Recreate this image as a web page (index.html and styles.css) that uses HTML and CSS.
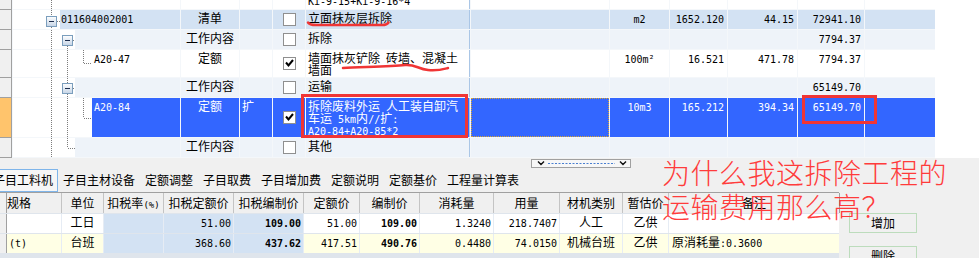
FILE: index.html
```html
<!DOCTYPE html>
<html lang="zh-CN">
<head>
    <meta charset="UTF-8">
    <title>定额子目 - 工料机</title>
    <link rel="stylesheet" href="styles.css">
</head>
<body>
<div class="page">

    <!-- 上方：清单 / 定额 树表 -->
    <div class="top">
        <div class="tgrid">

            <div class="row r-cut">
                <div class="rh"></div>
                <div class="tree">
                    <svg class="ind" width="62" height="9"><path class="dot" d="M38.5 0V9"/></svg>
                    <div class="code"></div>
                </div>
                <div class="c"></div>
                <div class="c"></div>
                <div class="c"></div>
                <div class="c name"><div class="cut"><span class="n">Ki-9-15+Ki-9-16*4</span></div></div>
                <div class="c spec"></div>
                <div class="c"></div>
                <div class="c"></div>
                <div class="c"></div>
                <div class="c"></div>
                <div class="c"></div>
            </div>

            <div class="row r-list">
                <div class="rh"></div>
                <div class="tree">
                    <svg class="ind" width="47" height="19">
                        <defs>
                            <linearGradient id="bxg" x1="0" y1="0" x2="0" y2="1">
                                <stop offset="0" stop-color="#ffffff"/>
                                <stop offset="1" stop-color="#c5d4e6"/>
                            </linearGradient>
                        </defs>
                        <path class="dot" d="M38.5 0V6M38.5 17V19M44 11.5H47"/>
                        <rect class="bx" x="33.5" y="6.5" width="10" height="10"/>
                        <path class="minus" d="M36 11.5H41"/>
                    </svg>
                    <div class="code"><span class="n">011604002001</span></div>
                </div>
                <div class="c ctr">清单</div>
                <div class="c"></div>
                <div class="c chk"><svg width="13" height="13"><rect class="box" x="0.5" y="0.5" width="12" height="12"/></svg></div>
                <div class="c name">立面抹灰层拆除</div>
                <div class="c spec"></div>
                <div class="c ctr"><span class="n">m2</span></div>
                <div class="c num"><span class="n">1652.120</span></div>
                <div class="c num"><span class="n">44.15</span></div>
                <div class="c num"><span class="n">72941.10</span></div>
                <div class="c"></div>
            </div>

            <div class="row r-work">
                <div class="rh"></div>
                <div class="tree">
                    <svg class="ind" width="62" height="19">
                        <path class="dot" d="M38.5 0V19M54.5 16V19M60 10.5H62"/>
                        <rect class="bx" x="49.5" y="5.5" width="10" height="10"/>
                        <path class="minus" d="M52 10.5H57"/>
                    </svg>
                    <div class="code"></div>
                </div>
                <div class="c ctr">工作内容</div>
                <div class="c"></div>
                <div class="c chk"><svg width="13" height="13"><rect class="box" x="0.5" y="0.5" width="12" height="12"/></svg></div>
                <div class="c name">拆除</div>
                <div class="c spec"></div>
                <div class="c"></div>
                <div class="c"></div>
                <div class="c"></div>
                <div class="c num"><span class="n">7794.37</span></div>
                <div class="c"></div>
            </div>

            <div class="row r-quota">
                <div class="rh"></div>
                <div class="tree">
                    <svg class="ind" width="79" height="27"><path class="dot" d="M38.5 0V27M54.5 0V27M70.5 0V13M71 13.5H79"/></svg>
                    <div class="code"><span class="n">A20-47</span></div>
                </div>
                <div class="c ctr">定额</div>
                <div class="c"></div>
                <div class="c chk"><svg width="13" height="13"><rect class="box" x="0.5" y="0.5" width="12" height="12"/><path class="tick" d="M3 5.5L5.5 8.5L10 3"/></svg></div>
                <div class="c name">墙面抹灰铲除<span class="n"> </span>砖墙、混凝土<br>墙面</div>
                <div class="c spec"></div>
                <div class="c ctr"><span class="n">100m²</span></div>
                <div class="c num"><span class="n">16.521</span></div>
                <div class="c num"><span class="n">471.78</span></div>
                <div class="c num"><span class="n">7794.37</span></div>
                <div class="c"></div>
            </div>

            <div class="row r-work">
                <div class="rh"></div>
                <div class="tree">
                    <svg class="ind" width="62" height="19">
                        <path class="dot" d="M38.5 0V19M54.5 0V5M54.5 16V19M60 10.5H62"/>
                        <rect class="bx" x="49.5" y="5.5" width="10" height="10"/>
                        <path class="minus" d="M52 10.5H57"/>
                    </svg>
                    <div class="code"></div>
                </div>
                <div class="c ctr">工作内容</div>
                <div class="c"></div>
                <div class="c chk"><svg width="13" height="13"><rect class="box" x="0.5" y="0.5" width="12" height="12"/></svg></div>
                <div class="c name">运输</div>
                <div class="c spec"></div>
                <div class="c"></div>
                <div class="c"></div>
                <div class="c"></div>
                <div class="c num"><span class="n">65149.70</span></div>
                <div class="c"></div>
            </div>

            <div class="row r-sel">
                <div class="rh"></div>
                <div class="tree">
                    <svg class="ind" width="79" height="39"><path class="dot" d="M38.5 0V39M54.5 0V39M70.5 0V20M71 20.5H79"/></svg>
                    <div class="code"><span class="n">A20-84</span></div>
                </div>
                <div class="c ctr">定额</div>
                <div class="c">扩</div>
                <div class="c chk"><svg width="13" height="13"><rect class="box" x="0.5" y="0.5" width="12" height="12"/><path class="tick" d="M3 5.5L5.5 8.5L10 3"/></svg></div>
                <div class="c name">拆除废料外运<span class="n"> </span>人工装自卸汽<br>车运<span class="n"> 5km</span>内<span class="n">//</span>扩<span class="n">:</span><br><span class="n">A20-84+A20-85*2</span></div>
                <div class="c spec"></div>
                <div class="c ctr"><span class="n">10m3</span></div>
                <div class="c num"><span class="n">165.212</span></div>
                <div class="c num"><span class="n">394.34</span></div>
                <div class="c num"><span class="n">65149.70</span></div>
                <div class="c"></div>
            </div>

            <div class="row r-work">
                <div class="rh"></div>
                <div class="tree">
                    <svg class="ind" width="62" height="19"><path class="dot" d="M38.5 0V19M54.5 0V10M55 10.5H62"/></svg>
                    <div class="code"></div>
                </div>
                <div class="c ctr">工作内容</div>
                <div class="c"></div>
                <div class="c chk"><svg width="13" height="13"><rect class="box" x="0.5" y="0.5" width="12" height="12"/></svg></div>
                <div class="c name">其他</div>
                <div class="c spec"></div>
                <div class="c"></div>
                <div class="c"></div>
                <div class="c"></div>
                <div class="c"></div>
                <div class="c"></div>
            </div>

        </div>
    </div>

    <!-- 下方：子目工料机 -->
    <div class="bottom">
        <div class="strip">
            <svg class="hscroll" width="100" height="9">
                <rect x="0.5" y="0.5" width="99" height="8" fill="#f7f7f7" stroke="#a0a0a0"/>
                <path class="chev" d="M7 2.5L10 5.5L13 2.5M89 2.5L92 5.5L95 2.5"/>
                <path class="dotline" d="M17 4.5H84"/>
            </svg>
        </div>

        <div class="tabs">
            <div class="tab on">子目工料机</div>
            <div class="tab">子目主材设备</div>
            <div class="tab">定额调整</div>
            <div class="tab">子目取费</div>
            <div class="tab">子目增加费</div>
            <div class="tab">定额说明</div>
            <div class="tab">定额基价</div>
            <div class="tab">工程量计算表</div>
        </div>

        <div class="lower">
            <div class="mat">
                <div class="mrow mhead">
                    <div class="m rh2"></div>
                    <div class="m left">规格</div>
                    <div class="m">单位</div>
                    <div class="m">扣税率<span class="pc">(%)</span></div>
                    <div class="m">扣税定额价</div>
                    <div class="m">扣税编制价</div>
                    <div class="m">定额价</div>
                    <div class="m">编制价</div>
                    <div class="m">消耗量</div>
                    <div class="m">用量</div>
                    <div class="m">材机类别</div>
                    <div class="m">暂估价</div>
                    <div class="m">备注</div>
                </div>
                <div class="mrow">
                    <div class="m rh2"></div>
                    <div class="m"></div>
                    <div class="m ctr">工日</div>
                    <div class="m tax"></div>
                    <div class="m tax num"><span class="n">51.00</span></div>
                    <div class="m tax num"><span class="n b">109.00</span></div>
                    <div class="m num"><span class="n">51.00</span></div>
                    <div class="m num"><span class="n b">109.00</span></div>
                    <div class="m num"><span class="n">1.3240</span></div>
                    <div class="m num"><span class="n">218.7407</span></div>
                    <div class="m ctr">人工</div>
                    <div class="m ctr">乙供</div>
                    <div class="m"></div>
                </div>
                <div class="mrow yl">
                    <div class="m rh2"></div>
                    <div class="m"><span class="n">(t)</span></div>
                    <div class="m ctr">台班</div>
                    <div class="m tax"></div>
                    <div class="m tax num"><span class="n">368.60</span></div>
                    <div class="m tax num"><span class="n b">437.62</span></div>
                    <div class="m num"><span class="n">417.51</span></div>
                    <div class="m num"><span class="n b">490.76</span></div>
                    <div class="m num"><span class="n">0.4480</span></div>
                    <div class="m num"><span class="n">74.0150</span></div>
                    <div class="m ctr">机械台班</div>
                    <div class="m ctr">乙供</div>
                    <div class="m note">原消耗量<span class="n">:0.3600</span></div>
                </div>
            </div>
            <div class="side">
                <div class="btn">增加</div>
                <div class="btn">删除</div>
            </div>
        </div>
    </div>

    <!-- 红笔批注 -->
    <svg class="marks" width="979" height="158">
        <path class="pen" d="M308 22.5Q309.5 25 316 25L382 25Q387 25 388.5 22.5"/>
        <path class="pen" d="M343 68C360 67 390 66.5 405 65C415 64 418 69 428 70C438 71 444 69 448 68"/>
        <rect x="302.5" y="95.5" width="164" height="41"/>
        <rect x="803.5" y="96.5" width="72" height="26"/>
    </svg>
    <div class="ask">为什么我这拆除工程的<br>运输费用那么高？</div>

</div>
</body>
</html>
```

FILE: styles.css
```css
html, body {
    margin: 0;
    overflow: hidden;
}

body {
    font-family: "Noto Sans CJK SC", sans-serif;
    font-size: 12px;
    color: #000;
    background: #fff;
}

.page {
    position: relative;
    width: 979px;
    height: 258px;
    overflow: hidden;
}

/* ascii / numbers, half width like the original bitmap font */
.n {
    font-family: "DejaVu Sans Mono", monospace;
    font-size: 10px;
    line-height: 0;
}

.n.b {
    font-weight: bold;
}

/* ---------- top tree grid ---------- */

.top {
    height: 158px;
    background: #fff;
}

.tgrid {
    width: 935px;
    display: flex;
    flex-direction: column;
    gap: 1px;
    padding-bottom: 1px;
    background: #f4f7fa;
}

.row {
    display: grid;
    grid-template-columns: 12px 167px 58px 32px 32px 164px 138px 59px 57px 69px 66px 70px;
    column-gap: 1px;
    background: #f4f7fa;
    --bg: #fff;
}

.r-cut   { height: 9px; }
.r-list  { height: 19px; --bg: #d3e2f3; }
.r-work  { height: 19px; --bg: #eef3f9; }
.r-quota { height: 27px; }
.r-sel   { height: 39px; --bg: #3366ff; color: #fff; }

.rh {
    background: #f0f0f0;
    border-right: 1px solid #a0a0a0;
    border-bottom: 1px solid #a0a0a0;
    margin-bottom: -1px;
}

.r-sel .rh {
    background: #ffc46c;
}

.tree {
    display: flex;
    background: #fff;
}

.ind {
    display: block;
    flex: none;
}

.dot {
    fill: none;
    stroke: #7c7c7c;
    stroke-width: 1;
    stroke-dasharray: 1 1;
}

.bx {
    fill: url(#bxg);
    stroke: #7b9ebd;
}

.minus {
    stroke: #1c2c4c;
    stroke-width: 1;
}

.code {
    flex: 1;
    background: var(--bg);
    padding: 2px 0 0 1px;
    line-height: 12px;
    white-space: nowrap;
}

.r-quota .code,
.r-sel .code {
    padding-left: 2px;
}

.c {
    background: var(--bg);
    padding: 2px 2px 0;
    line-height: 12px;
    white-space: nowrap;
    overflow: hidden;
}

.r-cut .c {
    padding-top: 0;
}

.cut {
    margin-top: -6px;
}

.ctr {
    text-align: center;
}

.num {
    text-align: right;
    padding-right: 3px;
}

.name {
    border-right: 1px solid #aac6e6;
}

.r-sel .spec {
    border: 1px dotted #d9a630;
}

.chk {
    display: flex;
    align-items: center;
    justify-content: center;
    padding: 0;
}

.chk svg {
    display: block;
}

.box {
    fill: #fff;
    stroke: #8f8f8f;
}

.tick {
    fill: none;
    stroke: #000;
    stroke-width: 2;
}

/* ---------- bottom panel ---------- */

.bottom {
    height: 100px;
    background: #f0f0f0;
}

.strip {
    height: 11px;
    box-sizing: border-box;
    padding: 1px 0 0 531px;
}

.hscroll {
    display: block;
}

.chev {
    fill: none;
    stroke: #111;
    stroke-width: 1.4;
}

.dotline {
    stroke: #4a7fd0;
    stroke-width: 1;
    stroke-dasharray: 2 1.5;
}

.tabs {
    display: flex;
    height: 23px;
}

.tab {
    height: 23px;
    box-sizing: border-box;
    border: 1px solid transparent;
    padding: 4px 4px 0;
    line-height: 12px;
    white-space: nowrap;
}

.tab.on {
    margin-left: -12px;
    border-color: #7fb5ea;
    background: #f6f6f6;
}

.lower {
    display: flex;
}

.mat {
    width: 839px;
    border-top: 1px solid #a0a0a0;
    background: #dfe5ec;
}

.mrow {
    display: grid;
    grid-template-columns: 6px 54px 41px 59px 69px 69px 55px 59px 73px 65px 62px 45px 170px;
    column-gap: 1px;
    height: 19px;
    margin-bottom: 1px;
    background: #e6ecf4;
    --bg: #fff;
}

.mrow.yl {
    --bg: #ffffe5;
}

.mhead {
    height: 20px;
    background: #c4c4c4;
    box-shadow: 1px 0 0 #a0a0a0;
}

.m {
    background: var(--bg);
    padding: 2px 2px 0;
    line-height: 12px;
    white-space: nowrap;
    overflow: hidden;
}

.mhead .m {
    background: #f0f0f0;
    padding-top: 4px;
    text-align: center;
}

.mhead .left {
    text-align: left;
    padding-left: 0;
}

.m.rh2 {
    background: #f0f0f0;
    box-shadow: 1px 0 0 #a0a0a0;
    padding: 0;
}

.m.tax {
    background: #d3e2f3;
}

.m.num {
    text-align: right;
    padding-right: 2px;
}

.m.note {
    padding-left: 3px;
}

.pc {
    font-family: "DejaVu Sans Mono", monospace;
    font-size: 9px;
    line-height: 0;
}

.side {
    flex: 1;
    padding: 21px 0 0 10px;
}

.btn {
    width: 68px;
    height: 20px;
    box-sizing: border-box;
    border: 1px solid #bcdcbc;
    text-align: center;
    line-height: 18px;
    margin-bottom: 13px;
}

/* ---------- red annotations ---------- */

.marks {
    position: absolute;
    left: 0;
    top: 0;
    fill: none;
    stroke: #f03535;
    stroke-width: 3;
    pointer-events: none;
}

.marks .pen {
    stroke-width: 2.5;
    stroke-linecap: round;
}

.ask {
    position: absolute;
    left: 662px;
    top: 155px;
    font-size: 28px;
    line-height: 34px;
    letter-spacing: 0.5px;
    font-weight: 300;
    color: #ff3b3b;
    white-space: nowrap;
}
```
